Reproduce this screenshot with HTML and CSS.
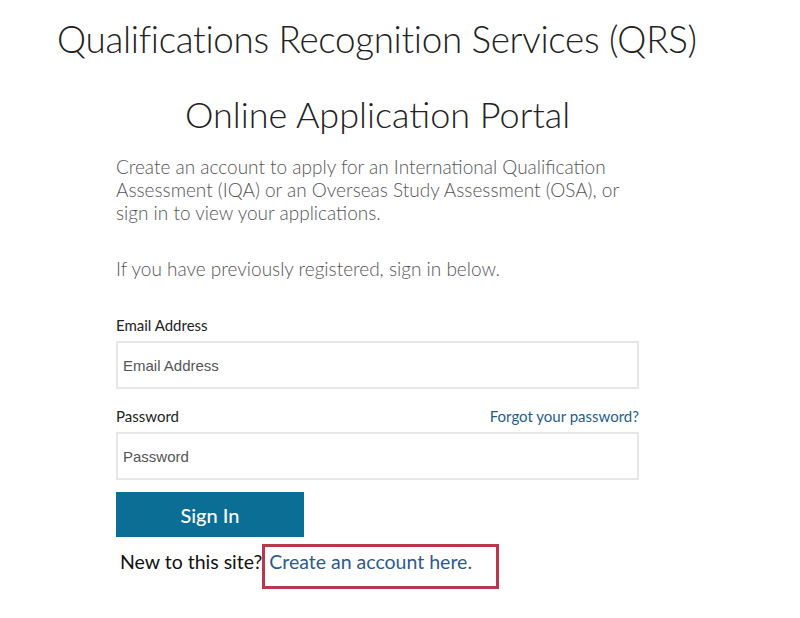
FILE: index.html
```html
<!DOCTYPE html>
<html>
<head>
<meta charset="utf-8">
<link rel="stylesheet" href="styles.css">
</head>
<body>
<div class="page">
  <h1 class="title">Qualifications Recognition Services (QRS)</h1>
  <div class="col">
    <h2 class="portal">Online Application Portal</h2>
    <p class="intro">Create an account to apply for an International Qualification Assessment (IQA) or an Overseas Study Assessment (OSA), or sign in to view your applications.</p>
    <p class="prev">If you have previously registered, sign in below.</p>
    <form class="form">
      <div class="label-row"><label class="label">Email Address</label></div>
      <input class="input" type="text" placeholder="Email Address">
      <div class="label-row"><label class="label">Password</label><a class="forgot" href="#">Forgot your password?</a></div>
      <input class="input last" type="password" placeholder="Password">
      <button class="btn" type="button">Sign In</button>
    </form>
    <div class="new">New to this site?<a class="create" href="#">Create an account here.</a></div>
  </div>
</div>
</body>
</html>
```
FILE: styles.css
```css
html, body {
  margin: 0;
  padding: 0;
  background: #ffffff;
}
.page {
  padding: 14px 0 0 57px;
  font-family: Lato, "Open Sans", sans-serif;
}
.title {
  margin: 0;
  font-weight: 300;
  font-size: 36.8px;
  line-height: 50px;
  color: #222;
  letter-spacing: -0.3px;
}
.col {
  margin-left: 59px;
  width: 523px;
}
.portal {
  margin: 28px 0 0 0;
  text-align: center;
  font-weight: 300;
  font-size: 36px;
  line-height: 44px;
  color: #222;
}
.intro {
  margin: 19px 0 0 0;
  font-weight: 300;
  font-size: 19px;
  line-height: 23px;
  color: #555;
  width: 510px;
}
.prev {
  margin: 33px 0 0 0;
  font-weight: 300;
  font-size: 19px;
  line-height: 23px;
  color: #555;
}
.form {
  margin-top: 35px;
  display: flex;
  flex-direction: column;
}
.label-row {
  display: flex;
  justify-content: space-between;
  align-items: baseline;
  height: 26px;
  line-height: 20px;
}
.label {
  font-size: 15px;
  color: #222;
  font-weight: 400;
}
.forgot {
  font-size: 15px;
  color: #1f5f8b;
  text-decoration: none;
}
.input {
  box-sizing: border-box;
  height: 48px;
  width: 523px;
  margin: 0 0 17px 0;
  border: 2px solid #e6e8e8;
  padding: 0 5px;
  font-family: "Liberation Sans", Arial, sans-serif;
  font-size: 15px;
  color: #555;
  outline: none;
}
.input::placeholder {
  color: #555;
}
.input.last {
  margin-bottom: 12px;
}
.btn {
  width: 188px;
  height: 45px;
  background: #0b6f95;
  border: none;
  color: #fff;
  font-family: Lato, sans-serif;
  font-size: 20px;
  font-weight: 500;
  padding: 0;
}
.new {
  margin: 7px 0 0 4px;
  font-size: 19.5px;
  color: #111;
  font-weight: 400;
  display: flex;
  align-items: baseline;
}
.create {
  color: #2d5a8e;
  text-decoration: none;
  border: 3px solid #b9384e;
  padding: 3px 24px 13px 4px;
}
```
